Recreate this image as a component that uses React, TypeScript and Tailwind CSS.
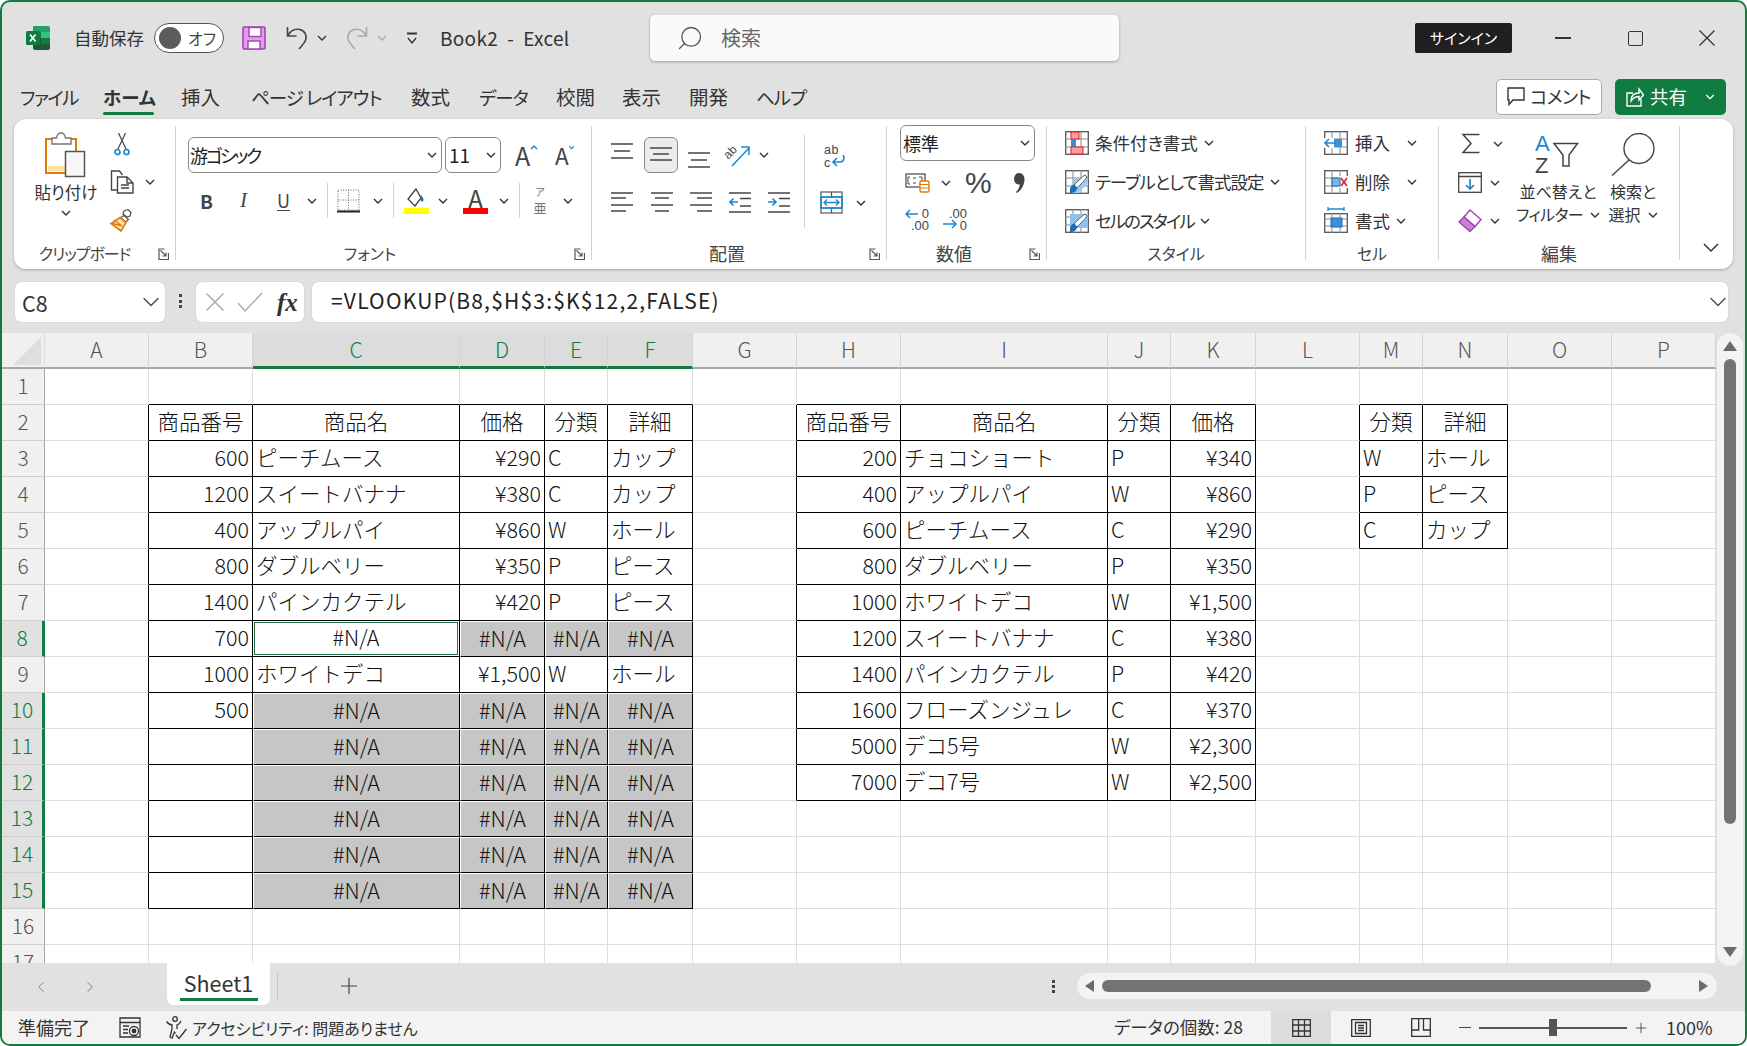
import { ChevronDown, Search, Plus, ChevronLeft, ChevronRight } from "lucide-react";

const LETTERS = ["A", "B", "C", "D", "E", "F", "G", "H", "I", "J", "K", "L", "M", "N", "O", "P"];
const SELECTED_COLS = [2, 3, 4, 5];
const SELECTED_ROWS = [8, 10, 11, 12, 13, 14, 15];

type Cell = { t: string; a: "l" | "r" | "c" };
const l = (t: string): Cell => ({ t, a: "l" });
const r = (t: string): Cell => ({ t, a: "r" });
const c = (t: string): Cell => ({ t, a: "c" });
const na = c("#N/A");

const sheet: Record<string, Cell> = {};
const put = (col: number, row: number, cells: Cell[]) =>
  cells.forEach((cell, i) => {
    sheet[`${row}-${col + i}`] = cell;
  });

put(1, 2, ["商品番号", "商品名", "価格", "分類", "詳細"].map(c));
put(1, 3, [r("600"), l("ピーチムース"), r("¥290"), l("C"), l("カップ")]);
put(1, 4, [r("1200"), l("スイートバナナ"), r("¥380"), l("C"), l("カップ")]);
put(1, 5, [r("400"), l("アップルパイ"), r("¥860"), l("W"), l("ホール")]);
put(1, 6, [r("800"), l("ダブルベリー"), r("¥350"), l("P"), l("ピース")]);
put(1, 7, [r("1400"), l("パインカクテル"), r("¥420"), l("P"), l("ピース")]);
put(1, 8, [r("700"), na, na, na, na]);
put(1, 9, [r("1000"), l("ホワイトデコ"), r("¥1,500"), l("W"), l("ホール")]);
put(1, 10, [r("500"), na, na, na, na]);
[11, 12, 13, 14, 15].forEach((row) => put(2, row, [na, na, na, na]));

put(7, 2, ["商品番号", "商品名", "分類", "価格"].map(c));
put(7, 3, [r("200"), l("チョコショート"), l("P"), r("¥340")]);
put(7, 4, [r("400"), l("アップルパイ"), l("W"), r("¥860")]);
put(7, 5, [r("600"), l("ピーチムース"), l("C"), r("¥290")]);
put(7, 6, [r("800"), l("ダブルベリー"), l("P"), r("¥350")]);
put(7, 7, [r("1000"), l("ホワイトデコ"), l("W"), r("¥1,500")]);
put(7, 8, [r("1200"), l("スイートバナナ"), l("C"), r("¥380")]);
put(7, 9, [r("1400"), l("パインカクテル"), l("P"), r("¥420")]);
put(7, 10, [r("1600"), l("フローズンジュレ"), l("C"), r("¥370")]);
put(7, 11, [r("5000"), l("デコ5号"), l("W"), r("¥2,300")]);
put(7, 12, [r("7000"), l("デコ7号"), l("W"), r("¥2,500")]);

put(12, 2, [c("分類"), c("詳細")]);
put(12, 3, [l("W"), l("ホール")]);
put(12, 4, [l("P"), l("ピース")]);
put(12, 5, [l("C"), l("カップ")]);

const tables = [
  [1, 5, 2, 15],
  [7, 10, 2, 12],
  [12, 13, 2, 5],
];
const inTable = (row: number, col: number) =>
  tables.some(([c1, c2, r1, r2]) => col >= c1 && col <= c2 && row >= r1 && row <= r2);
const isGray = (row: number, col: number) =>
  col >= 2 && col <= 5 && ((row === 8 && col > 2) || (row >= 10 && row <= 15));

const Chev = ({ className = "" }: { className?: string }) => (
  <svg width="10" height="6" viewBox="0 0 10 6" className={`shrink-0 ${className}`} fill="none" stroke="#333" strokeWidth="1.4">
    <path d="M1 1l4 4 4-4" />
  </svg>
);

const Launcher = () => (
  <svg width="11" height="12" viewBox="0 0 11 12" className="absolute bottom-0 right-[6px]" fill="none" stroke="#555" strokeWidth="1.2">
    <path d="M10.5 5V11.5H1V1H6.5" />
    <path d="M2.5 2.5L8 8M8 4.5V8H4.5" />
  </svg>
);

const ExcelLogo = () => (
  <svg width="24" height="24" viewBox="0 0 24 24" className="shrink-0">
    <path d="M7 0h15a2 2 0 0 1 2 2v4H7z" fill="#21a366" />
    <path d="M15 6h9v6h-9z" fill="#33c481" />
    <path d="M7 6h8v6H7z" fill="#107c41" />
    <path d="M15 12h9v6h-9z" fill="#107c41" />
    <path d="M7 12h8v6H7z" fill="#185c37" />
    <path d="M7 18h17v4a2 2 0 0 1-2 2H9a2 2 0 0 1-2-2z" fill="#185c37" />
    <rect x="0" y="5" width="14" height="14" rx="1.5" fill="#0f7b3f" />
    <path d="M4 8.5l5.5 7M9.5 8.5l-5.5 7" stroke="#fff" strokeWidth="1.7" />
  </svg>
);

const SaveIcon = () => (
  <svg width="24" height="24" viewBox="0 0 24 24" className="shrink-0">
    <rect x="1" y="1" width="22" height="22" rx="1" fill="#dda0e4" stroke="#a53fb8" strokeWidth="1.6" />
    <rect x="7" y="1.5" width="12" height="9" fill="#fff" stroke="#a53fb8" strokeWidth="1.4" />
    <rect x="6" y="15" width="12" height="8" fill="#fff" stroke="#a53fb8" strokeWidth="1.4" />
  </svg>
);

const UndoIcon = ({ color, flip = false }: { color: string; flip?: boolean }) => (
  <svg width="23" height="25" viewBox="0 0 23 25" className={`shrink-0 ${flip ? "-scale-x-100" : ""}`} fill="none" stroke={color} strokeWidth="1.6">
    <path d="M1.5 1v9h9" />
    <path d="M2 9.5C5 4 10 2.5 14 3.5c5 1.3 7.5 6.5 5.5 11-1.2 2.8-3.6 5-6.5 8.5" />
  </svg>
);

const CrossIcon = ({ size, color, width = 1.3 }: { size: number; color: string; width?: number }) => (
  <svg width={size} height={size} viewBox="0 0 16 16" fill="none" stroke={color} strokeWidth={width} className="shrink-0">
    <path d="M.5.500l15 15M15.500.500l-15 15" />
  </svg>
);

const ClipboardIcon = () => (
  <svg width="42" height="46" viewBox="0 0 42 46" fill="none">
    <rect x="1" y="7" width="30" height="34" fill="#fff" stroke="#e07b0a" strokeWidth="2" />
    <rect x="3" y="34" width="18" height="5" fill="#fbe3a4" />
    <path d="M7 12V6h4.500c.5-3 2-5 4.500-5s4 2 4.500 5H26v6z" fill="#fff" stroke="#777" strokeWidth="1.4" />
    <rect x="20.500" y="19.500" width="19" height="25" fill="#f7f7f7" stroke="#555" strokeWidth="1.5" />
  </svg>
);

const ScissorsIcon = () => (
  <svg width="16" height="24" viewBox="0 0 16 24" fill="none">
    <path d="M3.500 18L11.500 1M12.500 18L4.500 1" stroke="#444" strokeWidth="1.2" />
    <circle cx="3.500" cy="20" r="2.500" stroke="#1b88d0" strokeWidth="1.7" />
    <circle cx="12.500" cy="20" r="2.500" stroke="#1b88d0" strokeWidth="1.7" />
  </svg>
);

const CopyIcon = () => (
  <svg width="25" height="24" viewBox="0 0 25 24" fill="none" stroke="#444" strokeWidth="1.4">
    <path d="M7 20H1.500V1h8l3 4" />
    <path d="M7.500 7h9.500l6 6v10H7.500z" fill="#fff" />
    <path d="M17 7v6h6M11 15h8M11 18h8" />
  </svg>
);

const PainterIcon = () => (
  <svg width="25" height="24" viewBox="0 0 25 24" fill="none">
    <path d="M14 2l4-1.500 3 3-1 3.500-3 1-4-3z" fill="#fff" stroke="#555" strokeWidth="1.3" />
    <path d="M14 6.500l4.500 4-3 2.500-5-4.500z" fill="#fff" stroke="#555" strokeWidth="1.3" />
    <path d="M10 8.500l6 5-5 8.500-10-7.500z" fill="#fde2b8" stroke="#e07b0a" strokeWidth="1.7" />
    <path d="M2 14.500l9 2M4 11l8 6" stroke="#e07b0a" strokeWidth="1.3" />
  </svg>
);

const GrowA = ({ up }: { up: boolean }) => (
  <div className="flex items-start">
    <span className="text-[25px] leading-[26px] text-[#444]">A</span>
    <svg width="8" height="6" viewBox="0 0 8 6" className="mt-[2px]" fill="none" stroke="#1b88d0" strokeWidth="1.5">
      <path d={up ? "M1 5l3-3 3 3" : "M1 1l3 3 3-3"} />
    </svg>
  </div>
);

const BorderIcon = () => (
  <svg width="23" height="24" viewBox="0 0 23 24" fill="none">
    <rect x="1" y="1" width="21" height="20" stroke="#666" strokeDasharray="1 1.5" />
    <path d="M11.500 1v20M1 11h21" stroke="#666" strokeDasharray="1 1.5" />
    <path d="M0 22.500h23" stroke="#222" strokeWidth="2" />
  </svg>
);

const FillIcon = () => (
  <svg width="25" height="26" viewBox="0 0 25 26" fill="none">
    <path d="M12 1l-8 10 7 7 6-8z" fill="#fff" stroke="#444" strokeWidth="1.3" />
    <path d="M17 7c1.500 2 2.500 3.500 2.500 5a1.500 1.500 0 0 1-3 0c0-1.500 0-3 .5-5z" fill="#1b6fb5" />
    <rect x="0" y="20" width="25" height="6" fill="#ffff00" />
  </svg>
);

const FontColorIcon = () => (
  <div className="flex w-[25px] flex-col items-center">
    <span className="h-[20px] text-[24px] leading-[22px] text-[#444]">A</span>
    <div className="mt-[1px] h-[6px] w-[25px] bg-[#ff0000]" />
  </div>
);

const Lines = ({ ys, xs }: { ys: number[]; xs: [number, number][] }) => (
  <svg width="22" height="24" viewBox="0 0 22 24" fill="none" stroke="#444" strokeWidth="1.3" className="shrink-0">
    {ys.map((y, i) => (
      <path key={y} d={`M${xs[i][0]} ${y}H${xs[i][1]}`} />
    ))}
  </svg>
);

const vertLines: [number, number][] = [[0, 22], [3, 19], [0, 22]];
const leftLines: [number, number][] = [[0, 22], [0, 15], [0, 22], [0, 15]];
const centerLines: [number, number][] = [[0, 22], [4, 18], [0, 22], [4, 18]];
const rightLines: [number, number][] = [[0, 22], [7, 22], [0, 22], [7, 22]];

const IndentIcon = ({ out }: { out: boolean }) => (
  <svg width="22" height="21" viewBox="0 0 22 21" fill="none" className="shrink-0">
    <path d="M0 1h22M11 6.500h11M11 14h11M0 20h22" stroke="#444" strokeWidth="1.3" />
    <path d={out ? "M9 10H1M4.500 6.500L1 10l3.500 3.500" : "M0 10h8M4.500 6.500L8 10l-3.500 3.500"} stroke="#1b88d0" strokeWidth="1.6" />
  </svg>
);

const OrientIcon = () => (
  <svg width="26" height="24" viewBox="0 0 26 24" fill="none" className="overflow-visible">
    <text x="8" y="12" fontSize="12" fill="#444" fontFamily="Liberation Sans" transform="rotate(-45 8 12)" textAnchor="middle">ab</text>
    <path d="M7 23L24 5M16 4h8v8" stroke="#1b88d0" strokeWidth="1.5" />
  </svg>
);

const WrapIcon = () => (
  <svg width="22" height="24" viewBox="0 0 22 24" fill="none" className="overflow-visible">
    <text x="0" y="9.500" fontSize="12.500" fill="#444" fontFamily="Liberation Sans" letterSpacing="0.5">ab</text>
    <text x="0" y="23" fontSize="12.500" fill="#444" fontFamily="Liberation Sans">c</text>
    <path d="M19 11c2 2 1 7-3 7H9M13 14l-4 4 4 4" stroke="#1b88d0" strokeWidth="1.6" />
  </svg>
);

const MergeIcon = () => (
  <svg width="23" height="23" viewBox="0 0 23 23" fill="none">
    <rect x="1" y="1" width="21" height="21" stroke="#555" strokeWidth="1.2" />
    <path d="M1 6h21M1 17h21M11.500 1v5M11.500 17v5" stroke="#555" strokeWidth="1.2" />
    <rect x="1" y="6" width="21" height="11" stroke="#1b88d0" strokeWidth="1.6" />
    <path d="M4 11.500h15M7 8.500l-3 3 3 3M16 8.500l3 3-3 3" stroke="#1b88d0" strokeWidth="1.4" />
  </svg>
);

const AccountingIcon = () => (
  <svg width="25" height="20" viewBox="0 0 25 20" fill="none">
    <rect x="1" y="1" width="19" height="13" stroke="#444" strokeWidth="1.2" />
    <path d="M5 4H3v7h2M8 5h3M8 10h3M14 4h3v7h-3" stroke="#444" strokeWidth="1" />
    <rect x="15" y="8" width="9" height="11" rx="1.5" fill="#fff" stroke="#e07b0a" strokeWidth="1.4" />
    <path d="M15 11.500h9M15 15h9" stroke="#e07b0a" strokeWidth="1.2" />
  </svg>
);

const CommaIcon = () => (
  <svg width="11" height="20" viewBox="0 0 11 20">
    <path d="M5 0c3.500 0 5.500 3 5.500 6 0 6-3 11-7.500 14l-1-1c2.500-2.500 3.500-5 3.800-7.500C2.500 12 0 9.500 0 6c0-3 2-6 5-6z" fill="#444" />
  </svg>
);

const DecimalIcon = ({ more }: { more: boolean }) => (
  <svg width="24" height="23" viewBox="0 0 24 23" fill="none" className="overflow-visible">
    <text x="24" y="10" textAnchor="end" fontSize="13" fill="#444" fontFamily="Liberation Sans">{more ? ".00" : "0"}</text>
    <text x="24" y="22" textAnchor="end" fontSize="13" fill="#444" fontFamily="Liberation Sans">{more ? "0" : ".00"}</text>
    {more ? (
      <path d="M0 16h13M9 12l4 4-4 4" stroke="#1b88d0" strokeWidth="1.5" />
    ) : (
      <path d="M13 6H1M5 2L1 6l4 4" stroke="#1b88d0" strokeWidth="1.5" />
    )}
  </svg>
);

const GridBase = ({ children }: { children?: React.ReactNode }) => (
  <svg width="24" height="24" viewBox="0 0 24 24" fill="none" className="shrink-0">
    <rect x="0.700" y="0.700" width="22.600" height="22.600" fill="#fff" stroke="#555" strokeWidth="1.3" />
    <path d="M8 0v24M16 0v24M0 8h24M0 16h24" stroke="#888" strokeWidth="1" />
    {children}
  </svg>
);

const Brush = () => (
  <>
    <path d="M9 15c3-3 9-9 11-10l2 2c-1 2-7 8-10 11z" fill="#fff" stroke="#555" />
    <path d="M5 20c0-3 2-6 5-5l2 3c0 3-3 5-7 5z" fill="#1b6fb5" />
  </>
);

const CondFormatIcon = () => (
  <GridBase>
    <rect x="6" y="1" width="8" height="7" fill="#ff9c9c" stroke="#e02020" />
    <rect x="6" y="8" width="5" height="8" fill="#3b8fd6" />
    <rect x="6" y="16" width="12" height="7" fill="#ff9c9c" stroke="#e02020" />
  </GridBase>
);

const TableFormatIcon = () => (
  <GridBase>
    <path d="M8 8h15v5L13 23H8z" fill="#9cc9ef" />
    <Brush />
  </GridBase>
);

const CellStyleIcon = () => (
  <GridBase>
    <rect x="5" y="5" width="18" height="14" fill="#8fc1ec" />
    <Brush />
  </GridBase>
);

const InsertIcon = () => (
  <GridBase>
    <rect x="9" y="8" width="9" height="8" fill="#3b8fd6" />
    <rect x="0" y="7" width="10" height="10" fill="#fff" />
    <path d="M12 12H1M5 8l-4 4 4 4" stroke="#1b88d0" strokeWidth="1.6" />
  </GridBase>
);

const DeleteIcon = () => (
  <GridBase>
    <rect x="14" y="6" width="10" height="12" fill="#fff" />
    <rect x="8" y="8" width="8" height="8" fill="#7cb5e6" stroke="#1b6fb5" />
    <path d="M17 8l6 8M23 8l-6 8" stroke="#e02020" strokeWidth="1.6" />
  </GridBase>
);

const FormatIcon = () => (
  <svg width="24" height="26" viewBox="0 0 24 26" fill="none" className="-mt-[2px] shrink-0">
    <path d="M4 2h16M4 0v4M20 0v4" stroke="#1b88d0" strokeWidth="1.3" />
    <rect x="0.700" y="6.700" width="22.600" height="18.600" stroke="#555" strokeWidth="1.3" />
    <path d="M8 6v20M16 6v20M0 12h24M0 19h24" stroke="#888" />
    <rect x="7" y="11" width="11" height="9" fill="#3b8fd6" stroke="#1b6fb5" />
  </svg>
);

const SigmaIcon = () => (
  <svg width="19" height="21" viewBox="0 0 19 21" fill="none" stroke="#444" strokeWidth="1.5">
    <path d="M18.500 1.500H2L10 10.500 2 19.500H18.500" />
  </svg>
);

const FillDownIcon = () => (
  <svg width="24" height="21" viewBox="0 0 24 21" fill="none">
    <rect x="0.700" y="0.700" width="22.600" height="19.600" stroke="#444" strokeWidth="1.3" />
    <path d="M0 4.500h24" stroke="#444" strokeWidth="1.3" />
    <path d="M12 7v10M8 13l4 4 4-4" stroke="#1b88d0" strokeWidth="1.7" />
  </svg>
);

const EraserIcon = () => (
  <svg width="24" height="23" viewBox="0 0 24 23" fill="none">
    <path d="M12 1l11 9.500-6 7L6 8z" fill="#fff" stroke="#a53fb8" strokeWidth="1.4" />
    <path d="M6 8l11 9.500-5 5L1 13z" fill="#c586d0" stroke="#a53fb8" strokeWidth="1.4" />
  </svg>
);

const SortFilterIcon = () => (
  <svg width="44" height="41" viewBox="0 0 44 41" fill="none" className="overflow-visible">
    <text x="0" y="18" fontSize="22" fill="#1b88d0" fontFamily="Liberation Sans">A</text>
    <text x="0" y="40" fontSize="22" fill="#444" fontFamily="Liberation Sans">Z</text>
    <path d="M19 10.500h23.500L34 22v11h-6V22z" fill="#fff" stroke="#444" strokeWidth="1.5" />
  </svg>
);

const FindIcon = () => (
  <svg width="44" height="43" viewBox="0 0 44 43" fill="none" stroke="#444" strokeWidth="1.4">
    <circle cx="28" cy="15.500" r="15" />
    <path d="M18 27L1 42.500" />
  </svg>
);

const ShareIcon = () => (
  <svg width="18" height="20" viewBox="0 0 18 20" fill="none" stroke="#fff" strokeWidth="1.4">
    <path d="M7 6H1v13h14v-7" />
    <path d="M5 14c0-5 3-8 8-8V2l4.500 6L13 13V9.500c-4 0-6 1.500-8 4.500z" />
  </svg>
);

const CommentIcon = () => (
  <svg width="18" height="19" viewBox="0 0 18 19" fill="none" stroke="#333" strokeWidth="1.4">
    <path d="M1 1h16v12H6l-4 4.500V13H1z" />
  </svg>
);

const StatusIcons = {
  macro: (
    <svg width="22" height="21" viewBox="0 0 22 21" fill="none" stroke="#333" strokeWidth="1.3">
      <path d="M1 1h20v19H1zM1 5.500h20M4 9h6M4 12.500h5M4 16h5" />
      <circle cx="15" cy="14" r="4.500" fill="#fff" />
      <circle cx="15" cy="14" r="1.800" fill="#333" />
    </svg>
  ),
  access: (
    <svg width="23" height="24" viewBox="0 0 23 24" fill="none" stroke="#333" strokeWidth="1.3">
      <circle cx="10" cy="3" r="2.300" />
      <path d="M1.500 5.500c2 2.500 4 3.500 5.500 3.500v4L5 21l2 1 2.500-6 1 1.500M16 5c-1.500 2.500-3 4-4 4v4" />
      <path d="M11 19l3 3.500L21.500 13" />
    </svg>
  ),
  normal: (
    <svg width="19" height="18" viewBox="0 0 19 18" fill="none" stroke="#333" strokeWidth="1.3">
      <path d="M.700.700h17.600v16.600H.700zM6.500 0v18M12.500 0v18M0 6h19M0 12h19" />
    </svg>
  ),
  page: (
    <svg width="20" height="18" viewBox="0 0 20 18" fill="none" stroke="#333" strokeWidth="1.3">
      <path d="M.700.700h18.600v16.600H.700zM4.500 3.500h11v11h-11zM7 6.500h6M7 9h6M7 11.500h6" />
    </svg>
  ),
  brk: (
    <svg width="20" height="19" viewBox="0 0 20 19" fill="none" stroke="#333" strokeWidth="1.3">
      <path d="M.700 12V.700h18.600V12M.700 12v6.300h18.600V12M.700 12h7V1M12.500 1v11h6.800" />
    </svg>
  ),
};

const SectionLabel = ({ text, className = "" }: { text: string; className?: string }) => (
  <div className={`mt-[1px] h-[16px] whitespace-nowrap text-center leading-[16px] text-[#444] ${className}`}>{text}</div>
);

const Ribbon = () => (
  <div className="ml-[12px] flex h-[150px] w-[1719px] shrink-0 rounded-[12px] bg-white pt-[7px] shadow-[0_1px_3px_rgba(0,0,0,0.25)]">
    {/* クリップボード */}
    <div className="relative h-[134px] w-[162px] shrink-0 border-r border-[#d2d2d2]">
      <div className="flex h-[118px]">
        <div className="ml-[21px] flex w-[62px] flex-col items-center pt-[6px]">
          <ClipboardIcon />
          <div className="mt-[4px] whitespace-nowrap text-[16.5px] leading-[20px] text-[#333]">貼り付け</div>
          <Chev className="mt-[8px]" />
        </div>
        <div className="ml-[13px] flex flex-col items-start pt-[6px]">
          <div className="ml-[4px]"><ScissorsIcon /></div>
          <div className="mt-[14px] flex items-center">
            <CopyIcon />
            <Chev className="ml-[10px]" />
          </div>
          <div className="mt-[15px]"><PainterIcon /></div>
        </div>
      </div>
      <SectionLabel text="クリップボード" className="pr-[20px] text-[16px] tracking-[-1px]" />
      <Launcher />
    </div>

    {/* フォント */}
    <div className="relative h-[134px] w-[416px] shrink-0 border-r border-[#d2d2d2]">
      <div className="h-[118px]">
        <div className="flex items-center pt-[11px]">
          <div className="ml-[12px] flex h-[36px] w-[254px] items-center justify-between rounded-[6px] border border-[#8a8a8a] pl-[1px] pr-[4px] text-[18px] leading-[32px] text-[#222]">
            <span className="tracking-[-2.4px]">游ゴシック</span>
            <Chev />
          </div>
          <div className="ml-[3px] flex h-[36px] w-[56px] items-center justify-between rounded-[6px] border border-[#8a8a8a] pl-[3px] pr-[4px] text-[19px] leading-[32px] text-[#222]">
            <span>11</span>
            <Chev />
          </div>
          <div className="ml-[14px] w-[24px]"><GrowA up /></div>
          <div className="ml-[15px] w-[22px] scale-90"><GrowA up={false} /></div>
        </div>
        <div className="mt-[10px] flex h-[35px] items-center text-[#444]">
          <span className="ml-[24px] w-[14px] text-[19px] font-bold leading-none">B</span>
          <span className="ml-[26px] w-[10px] font-['Liberation_Serif',serif] text-[21px] italic leading-none">I</span>
          <span className="ml-[27px] w-[13px] border-b border-[#444] text-[18px] leading-[20px]">U</span>
          <Chev className="ml-[17px]" />
          <div className="ml-[10px] h-[35px] w-px bg-[#d2d2d2]" />
          <div className="ml-[9px]"><BorderIcon /></div>
          <Chev className="ml-[13px]" />
          <div className="ml-[10px] h-[35px] w-px bg-[#d2d2d2]" />
          <div className="ml-[10px]"><FillIcon /></div>
          <Chev className="ml-[9px]" />
          <div className="ml-[15px]"><FontColorIcon /></div>
          <Chev className="ml-[11px]" />
          <div className="ml-[10px] h-[35px] w-px bg-[#d2d2d2]" />
          <div className="ml-[13px] flex w-[14px] flex-col items-center">
            <span className="text-[10px] leading-[14px] text-[#666]">ア</span>
            <span className="text-[13px] leading-[18px] text-[#777]">亜</span>
          </div>
          <Chev className="ml-[16px]" />
        </div>
      </div>
      <SectionLabel text="フォント" className="pr-[27px] text-[16px]" />
      <Launcher />
    </div>

    {/* 配置 */}
    <div className="relative h-[134px] w-[295px] shrink-0 border-r border-[#d2d2d2]">
      <div className="flex h-[118px] pt-[9px]">
        <div className="h-[93px] w-[213px] shrink-0 border-r border-[#d2d2d2] pt-[2px]">
          <div className="flex h-[36px] items-center">
            <div className="ml-[19px]"><Lines ys={[1, 8, 15]} xs={vertLines} /></div>
            <div className="ml-[11px] flex h-[36px] w-[34px] items-center justify-center rounded-[6px] border border-[#8a8a8a] bg-[#ececec]">
              <Lines ys={[5, 11, 17]} xs={vertLines} />
            </div>
            <div className="ml-[10px] mt-[8px]"><Lines ys={[6, 13, 20]} xs={vertLines} /></div>
            <div className="ml-[15px]"><OrientIcon /></div>
            <Chev className="ml-[8px]" />
          </div>
          <div className="mt-[17px] flex h-[24px] items-center">
            <div className="ml-[19px]"><Lines ys={[3, 8, 15, 21]} xs={leftLines} /></div>
            <div className="ml-[18px]"><Lines ys={[3, 8, 15, 21]} xs={centerLines} /></div>
            <div className="ml-[17px]"><Lines ys={[3, 8, 15, 21]} xs={rightLines} /></div>
            <div className="ml-[17px]"><IndentIcon out /></div>
            <div className="ml-[17px]"><IndentIcon out={false} /></div>
          </div>
        </div>
        <div className="flex flex-col items-start pt-[9px]">
          <div className="ml-[19px]"><WrapIcon /></div>
          <div className="ml-[15px] mt-[23px] flex items-center">
            <MergeIcon />
            <Chev className="ml-[13px]" />
          </div>
        </div>
      </div>
      <SectionLabel text="配置" className="pr-[24px] text-[18px]" />
      <Launcher />
    </div>

    {/* 数値 */}
    <div className="relative h-[134px] w-[160px] shrink-0 border-r border-[#d2d2d2]">
      <div className="h-[118px]">
        <div className="ml-[13px] flex h-[36px] w-[135px] -translate-y-[1px] items-center justify-between rounded-[6px] border border-[#8a8a8a] pl-[2px] pr-[4px] text-[18px] leading-[32px] text-[#222]">
          <span>標準</span>
          <Chev />
        </div>
        <div className="mt-[9px] flex h-[24px] items-center">
          <div className="ml-[18px]"><AccountingIcon /></div>
          <Chev className="ml-[11px]" />
          <span className="ml-[14px] w-[26px] font-['Liberation_Sans',sans-serif] text-[30px] leading-none text-[#444]">%</span>
          <div className="ml-[23px]"><CommaIcon /></div>
        </div>
        <div className="mt-[13px] flex h-[23px] items-center">
          <div className="ml-[18px]"><DecimalIcon more={false} /></div>
          <div className="ml-[14px]"><DecimalIcon more /></div>
        </div>
      </div>
      <SectionLabel text="数値" className="pr-[25px] text-[18px]" />
      <Launcher />
    </div>

    {/* スタイル */}
    <div className="h-[134px] w-[259px] shrink-0 border-r border-[#d2d2d2]">
      <div className="flex h-[118px] flex-col gap-[15px] pl-[18px] pt-[5px] text-[17.5px] leading-[24px] text-[#333]">
        <div className="flex h-[24px] items-center">
          <CondFormatIcon />
          <span className="ml-[6px] whitespace-nowrap">条件付き書式</span>
          <Chev className="ml-[6px]" />
        </div>
        <div className="flex h-[24px] items-center">
          <TableFormatIcon />
          <span className="ml-[6px] whitespace-nowrap tracking-[-1px]">テーブルとして書式設定</span>
          <Chev className="ml-[6px]" />
        </div>
        <div className="flex h-[24px] items-center">
          <CellStyleIcon />
          <span className="ml-[6px] whitespace-nowrap tracking-[-2px]">セルのスタイル</span>
          <Chev className="ml-[6px]" />
        </div>
      </div>
      <SectionLabel text="スタイル" className="text-[16px]" />
    </div>

    {/* セル */}
    <div className="h-[134px] w-[133px] shrink-0 border-r border-[#d2d2d2]">
      <div className="flex h-[118px] flex-col gap-[15px] pl-[18px] pt-[5px] text-[17.5px] leading-[24px] text-[#333]">
        <div className="flex h-[24px] items-center">
          <InsertIcon />
          <span className="ml-[7px] w-[52px]">挿入</span>
          <Chev />
        </div>
        <div className="flex h-[24px] items-center">
          <DeleteIcon />
          <span className="ml-[7px] w-[52px]">削除</span>
          <Chev />
        </div>
        <div className="flex h-[24px] items-center">
          <FormatIcon />
          <span className="ml-[7px] w-[41px]">書式</span>
          <Chev />
        </div>
      </div>
      <SectionLabel text="セル" className="text-[16px]" />
    </div>

    {/* 編集 */}
    <div className="h-[134px] w-[241px] shrink-0 border-r border-[#d2d2d2]">
      <div className="flex h-[118px] pt-[7px] text-[16px] leading-[23px] text-[#333]">
        <div className="ml-[19px] flex w-[50px] flex-col">
          <div className="flex h-[21px] items-center">
            <div className="ml-[3px]"><SigmaIcon /></div>
            <Chev className="ml-[13px]" />
          </div>
          <div className="mt-[18px] flex h-[21px] items-center">
            <FillDownIcon />
            <Chev className="ml-[8px]" />
          </div>
          <div className="mt-[16px] flex h-[23px] items-center">
            <EraserIcon />
            <Chev className="ml-[8px]" />
          </div>
        </div>
        <div className="ml-[9px] flex w-[82px] flex-col items-center">
          <div className="ml-[-2px]"><SortFilterIcon /></div>
          <div className="mt-[6px] whitespace-nowrap">並べ替えと</div>
          <div className="flex items-center whitespace-nowrap tracking-[-0.6px]">
            フィルター
            <Chev className="ml-[7px]" />
          </div>
        </div>
        <div className="ml-[8px] flex w-[52px] flex-col items-center">
          <FindIcon />
          <div className="mt-[4px] whitespace-nowrap">検索と</div>
          <div className="flex items-center whitespace-nowrap">
            選択
            <Chev className="ml-[7px]" />
          </div>
        </div>
      </div>
      <SectionLabel text="編集" className="text-[18px]" />
    </div>

    <div className="flex h-[134px] flex-1 items-end pb-[7px] pl-[23px]">
      <svg width="16" height="10" viewBox="0 0 16 10" fill="none" stroke="#333" strokeWidth="1.5">
        <path d="M1 1l7 7 7-7" />
      </svg>
    </div>
  </div>
);

const colsClass =
  "grid grid-cols-[43px_104px_104px_207px_85px_63px_85px_104px_104px_207px_63px_85px_104px_63px_85px_104px_104px] auto-rows-[36px]";

const Sheet = () => {
  const rows = Array.from({ length: 17 }, (_, i) => i + 1);
  return (
    <div className={`h-[630px] w-[1714px] shrink-0 overflow-hidden bg-white font-light ${colsClass}`}>
      <div className="flex items-center justify-center border-b-2 border-r border-[#a8a8a8] border-r-[#dcdcdc] bg-[#f0f0f0]">
        <svg width="28" height="28" viewBox="0 0 28 28" className="ml-[8px] mt-[2px]">
          <path d="M28 0v28H0z" fill="#dedede" />
        </svg>
      </div>
      {LETTERS.map((letter, i) => {
        const sel = SELECTED_COLS.includes(i);
        return (
          <div
            key={letter}
            className={`flex items-center justify-center border-r border-[#d4d4d4] text-[21px] ${
              sel ? "border-b-[3px] border-b-[#107c41] bg-[#dcdcdc] text-[#107c41]" : "border-b-2 border-b-[#a8a8a8] bg-[#f0f0f0] text-[#555]"
            }`}
          >
            {letter}
          </div>
        );
      })}
      {rows.map((row) => {
        const sel = SELECTED_ROWS.includes(row);
        return [
          <div
            key={`h${row}`}
            className={`flex items-center justify-center border-b border-[#cfcfcf] pb-[2px] text-[21px] ${
              sel ? "border-r-[3px] border-r-[#107c41] bg-[#e1e1e1] text-[#107c41]" : "border-r border-r-[#a8a8a8] bg-[#f0f0f0] text-[#555]"
            }`}
          >
            {row}
          </div>,
          ...LETTERS.map((_, col) => {
            const cell = sheet[`${row}-${col}`];
            const blackR = inTable(row, col) || inTable(row, col + 1);
            const blackB = inTable(row, col) || inTable(row + 1, col);
            const gray = isGray(row, col);
            const active = row === 8 && col === 2;
            return (
              <div
                key={`${row}-${col}`}
                className={`flex overflow-hidden whitespace-nowrap border-b border-r text-[21.5px] leading-[32px] text-[#111] [font-feature-settings:normal] ${
                  blackR ? "border-r-black" : "border-r-[#dedede]"
                } ${blackB ? "border-b-black" : "border-b-[#dedede]"} ${
                  gray ? "border-l border-t border-l-white border-t-white bg-[#c6c6c6]" : ""
                } ${active ? "p-[1px]" : ""}`}
              >
                <div
                  className={`w-full ${active ? "border-[1.5px] border-[#217346] leading-[28px]" : ""} ${
                    cell?.a === "r" ? "pr-[3px] text-right" : cell?.a === "c" ? "text-center" : "pl-[3px]"
                  }`}
                >
                  {cell?.t}
                </div>
              </div>
            );
          }),
        ];
      })}
    </div>
  );
};

const tabs = [
  { label: "ファイル", cls: "w-[83px] text-[18.5px] tracking-[-1.5px]" },
  { label: "ホーム", cls: "w-[78px] text-[18.5px] font-bold" },
  { label: "挿入", cls: "w-[70px] text-[19.5px]" },
  { label: "ページ レイアウト", cls: "w-[160px] text-[18.5px] tracking-[-1px]" },
  { label: "数式", cls: "w-[68px] text-[19.5px]" },
  { label: "データ", cls: "w-[77px] text-[18.5px] tracking-[-1px]" },
  { label: "校閲", cls: "w-[66px] text-[19.5px]" },
  { label: "表示", cls: "w-[67px] text-[19.5px]" },
  { label: "開発", cls: "w-[67px] text-[19.5px]" },
  { label: "ヘルプ", cls: "w-[60px] text-[18.5px] tracking-[-1px]" },
];

export default function App() {
  return (
    <div className="h-[1046px] w-[1747px] overflow-hidden bg-white">
      <div className="flex h-[1046px] w-[1747px] flex-col overflow-hidden rounded-[10px] border-2 border-[#107c41] bg-[#e1e1e1] font-['Noto_Sans_CJK_JP','Noto_Sans',sans-serif] text-[#333] [font-feature-settings:'palt']">
        {/* タイトルバー */}
        <div className="flex h-[72px] shrink-0 items-center pl-[24px]">
          <ExcelLogo />
          <span className="ml-[24px] w-[71px] whitespace-nowrap text-[17.5px]">自動保存</span>
          <div className="ml-[9px] flex h-[30px] w-[70px] items-center rounded-full border border-[#555] bg-white pl-[4px]">
            <div className="h-[22px] w-[22px] rounded-full bg-[#5c5c5c]" />
            <span className="ml-[7px] text-[16px] text-[#444]">オフ</span>
          </div>
          <div className="ml-[18px]"><SaveIcon /></div>
          <div className="ml-[20px]"><UndoIcon color="#444" /></div>
          <Chev className="ml-[8px]" />
          <div className="ml-[18px]"><UndoIcon color="#a8a8a8" flip /></div>
          <Chev className="ml-[9px] opacity-30" />
          <svg width="12" height="13" viewBox="0 0 12 13" className="ml-[19px]" fill="none" stroke="#333" strokeWidth="1.4">
            <path d="M1 1.500h10" strokeWidth="2" />
            <path d="M2 6l4 5 4-5" />
          </svg>
          <span className="ml-[22px] w-[130px] whitespace-pre text-[19px] tracking-[0.3px]">Book2  -  Excel</span>
          <div className="ml-[80px] flex h-[46px] w-[469px] items-center rounded-[5px] bg-[#fafafa] pl-[26px] shadow-[0_1px_3px_rgba(0,0,0,0.3)]">
            <Search className="h-[28px] w-[28px] -scale-x-100 text-[#555]" strokeWidth={1.1} />
            <span className="ml-[17px] text-[20px] text-[#666]">検索</span>
          </div>
          <div className="ml-[296px] flex h-[30px] w-[97px] items-center justify-center rounded-[2px] bg-[#202020] text-[15px] text-white">サインイン</div>
          <div className="ml-[43px] h-[1.5px] w-[16px] shrink-0 bg-[#333]" />
          <div className="ml-[57px] h-[15px] w-[15px] shrink-0 rounded-[2px] border-[1.5px] border-[#333]" />
          <div className="ml-[56px]"><CrossIcon size={16} color="#333" /></div>
        </div>

        {/* タブ */}
        <div className="flex h-[45px] shrink-0 items-center pl-[18px]">
          {tabs.map((tab) => (
            <div key={tab.label} className={`relative h-[34px] shrink-0 whitespace-nowrap leading-[34px] ${tab.cls}`}>
              {tab.label}
              {tab.label === "ホーム" && <div className="absolute bottom-[-1px] left-0 h-[3px] w-[51px] rounded-full bg-[#107c41]" />}
            </div>
          ))}
          <div className="ml-[680px] flex h-[36px] w-[106px] items-center justify-center gap-[5px] rounded-[5px] border border-[#aaa] bg-white text-[18px] tracking-[-0.5px]">
            <CommentIcon />
            コメント
          </div>
          <div className="ml-[13px] flex h-[36px] w-[111px] items-center rounded-[5px] bg-[#107c41] pl-[11px] text-[18.5px] text-white">
            <ShareIcon />
            <span className="ml-[6px]">共有</span>
            <ChevronDown className="ml-[16px] h-[14px] w-[14px] text-white" />
          </div>
        </div>

        <Ribbon />

        {/* 数式バー */}
        <div className="flex h-[64px] shrink-0 items-start pl-[13px] pt-[13px]">
          <div className="flex h-[40px] w-[150px] items-center justify-between rounded-[6px] bg-white pl-[7px] text-[21.5px] shadow-[0_0_1px_rgba(0,0,0,0.3)]">
            <span className="pt-[3px]">C8</span>
            <ChevronDown className="h-[28px] w-[28px] text-[#444]" strokeWidth={1.1} />
          </div>
          <div className="ml-[14px] mt-[12px] flex flex-col gap-[2.5px]">
            <div className="h-[3px] w-[3px] bg-[#444]" />
            <div className="h-[3px] w-[3px] bg-[#444]" />
            <div className="h-[3px] w-[3px] bg-[#444]" />
          </div>
          <div className="ml-[14px] flex h-[40px] w-[108px] items-center rounded-[6px] bg-white pl-[10px] shadow-[0_0_1px_rgba(0,0,0,0.3)]">
            <CrossIcon size={18} color="#a8a8a8" />
            <svg width="26" height="20" viewBox="0 0 26 20" fill="none" stroke="#a8a8a8" strokeWidth="1.3" className="ml-[13px] shrink-0">
              <path d="M1 11l7 8L25 1" />
            </svg>
            <span className="ml-[14px] font-['Liberation_Serif',serif] text-[25px] font-bold italic leading-none text-[#333]">fx</span>
          </div>
          <div className="ml-[8px] flex h-[40px] w-[1416px] items-center justify-between rounded-[6px] bg-white pl-[19px] shadow-[0_0_1px_rgba(0,0,0,0.3)]">
            <span className="pb-[2px] text-[21px] tracking-[1.2px] text-[#222]">=VLOOKUP(B8,$H$3:$K$12,2,FALSE)</span>
            <ChevronDown className="-mr-[4px] h-[28px] w-[28px] text-[#444]" strokeWidth={1.1} />
          </div>
        </div>

        {/* シート */}
        <div className="flex h-[630px] shrink-0">
          <Sheet />
          <div className="relative z-10 ml-[1px] flex h-[633px] w-[26px] shrink-0 flex-col items-center rounded-full bg-[#f3f3f3] pt-[8px]">
            <div className="h-0 w-0 border-x-[7px] border-b-[10px] border-x-transparent border-b-[#6b6b6b]" />
            <div className="mt-[8px] h-[465px] w-[12px] rounded-full bg-[#737373]" />
            <div className="mb-[9px] mt-auto h-0 w-0 border-x-[7px] border-t-[10px] border-x-transparent border-t-[#6b6b6b]" />
          </div>
        </div>

        {/* シートタブ */}
        <div className="flex h-[48px] shrink-0 items-start bg-[#e1e1e1]">
          <ChevronLeft className="ml-[30px] mt-[10px] h-[28px] w-[18px] text-[#777]" strokeWidth={1.2} />
          <ChevronRight className="ml-[31px] mt-[10px] h-[28px] w-[18px] text-[#777]" strokeWidth={1.2} />
          <div className="relative ml-[68px] flex h-[42px] w-[103px] items-start justify-center rounded-b-[7px] bg-white pt-[6px] text-[21.5px] leading-[28px]">
            Sheet1
            <div className="absolute bottom-[4px] left-[13px] h-[3px] w-[78px] bg-[#107c41]" />
          </div>
          <div className="ml-[7px] mt-[10px] h-[27px] w-px bg-[#c8c8c8]" />
          <Plus className="ml-[58px] mt-[10px] h-[26px] w-[26px] text-[#444]" strokeWidth={1.1} />
          <div className="ml-[690px] mt-[17px] flex flex-col gap-[2px]">
            <div className="h-[3px] w-[3px] bg-[#444]" />
            <div className="h-[3px] w-[3px] bg-[#444]" />
            <div className="h-[3px] w-[3px] bg-[#444]" />
          </div>
          <div className="ml-[22px] mt-[10px] flex h-[26px] w-[640px] items-center rounded-full bg-[#f3f3f3] pl-[8px]">
            <div className="h-0 w-0 border-y-[6px] border-r-[9px] border-y-transparent border-r-[#6b6b6b]" />
            <div className="ml-[8px] h-[12px] w-[549px] rounded-full bg-[#737373]" />
            <div className="ml-[48px] h-0 w-0 border-y-[6px] border-l-[9px] border-y-transparent border-l-[#6b6b6b]" />
          </div>
        </div>

        {/* ステータスバー */}
        <div className="flex h-[33px] shrink-0 items-center bg-[#f3f3f3] text-[16px]">
          <span className="ml-[16px] w-[72px] whitespace-nowrap text-[18px]">準備完了</span>
          <div className="ml-[29px]">{StatusIcons.macro}</div>
          <div className="ml-[24px]">{StatusIcons.access}</div>
          <span className="ml-[4px] w-[225px] whitespace-nowrap">アクセシビリティ: 問題ありません</span>
          <span className="ml-[697px] w-[130px] whitespace-nowrap text-[17.5px]">データの個数: 28</span>
          <div className="ml-[27px] flex h-[33px] w-[60px] items-center justify-center bg-[#dcdcdc]">{StatusIcons.normal}</div>
          <div className="ml-[20px]">{StatusIcons.page}</div>
          <div className="ml-[40px]">{StatusIcons.brk}</div>
          <span className="ml-[28px] h-[1.5px] w-[12px] bg-[#444]" />
          <div className="relative ml-[8px] h-[2px] w-[148px] bg-[#555]">
            <div className="absolute left-[70px] top-[-8px] h-[17px] w-[8px] bg-[#555]" />
          </div>
          <Plus className="ml-[6px] h-[16px] w-[16px] text-[#444]" strokeWidth={1.3} />
          <span className="ml-[17px] whitespace-nowrap text-[18px]">100%</span>
        </div>
      </div>
    </div>
  );
}
